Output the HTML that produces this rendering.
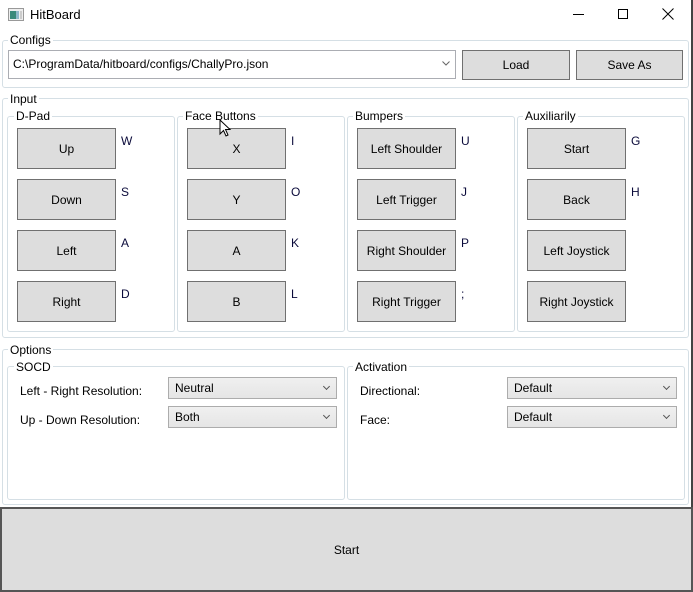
<!DOCTYPE html><html><head><style>
*{box-sizing:border-box}
body{margin:0;width:693px;height:592px;background:#fff;font-family:"Liberation Sans",sans-serif;font-size:12px;color:#000;position:relative;overflow:hidden}
.a{position:absolute}
.g{position:absolute;border:1px solid #d5dfe5;border-radius:3px}
.gl{position:absolute;background:#fff;padding:0 2px;line-height:14px}
.b{position:absolute;background:#dddddd;border:1px solid #707070;display:flex;align-items:center;justify-content:center}
.k{position:absolute;color:#0a0a3a}
.c{position:absolute;border:1px solid #acacac;background:linear-gradient(#f0f0f0,#e5e5e5);padding-left:6px;line-height:21px}
.c:after{content:"";position:absolute;right:7px;top:6px;width:4px;height:4px;border-right:1px solid #555;border-bottom:1px solid #555;transform:rotate(45deg)}
</style></head><body>
<div class="a" style="left:691px;top:0;width:2px;height:592px;background:#444"></div>
<svg class="a" style="left:8px;top:8px" width="16" height="13"><rect x="0.5" y="0.5" width="15" height="12" fill="#eee" stroke="#999"/><rect x="2" y="3" width="6" height="8" fill="#3a8a7a"/><rect x="8" y="3" width="3" height="8" fill="#8fb8c8"/><rect x="12" y="3" width="2" height="8" fill="#ccc"/></svg>
<div class="a" style="left:30px;top:7px;font-size:13px">HitBoard</div>
<div class="a" style="left:573px;top:14px;width:11px;height:1px;background:#000"></div>
<div class="a" style="left:618px;top:9px;width:10px;height:10px;border:1px solid #000"></div>
<svg class="a" style="left:662px;top:8px" width="12" height="12"><path d="M0.5 0.5L11.5 11.5M11.5 0.5L0.5 11.5" stroke="#000"/></svg>

<div class="g" style="left:2px;top:40px;width:687px;height:48px"></div><div class="gl" style="left:8px;top:33px">Configs</div>
<div class="a" style="left:8px;top:50px;width:448px;height:29px;border:1px solid #abadb3;background:#fff;padding:6px 0 0 4px">C:\ProgramData/hitboard/configs/ChallyPro.json</div>
<svg class="a" style="left:442px;top:61px" width="8" height="5"><path d="M0.5 0.5L4 4L7.5 0.5" stroke="#666" fill="none"/></svg>
<div class="b" style="left:462px;top:50px;width:108px;height:30px">Load</div>
<div class="b" style="left:576px;top:50px;width:107px;height:30px">Save As</div>

<div class="g" style="left:2px;top:98px;width:687px;height:240px"></div><div class="gl" style="left:8px;top:92px">Input</div>
<div class="g" style="left:7px;top:116px;width:168px;height:216px"></div><div class="gl" style="left:14px;top:109px">D-Pad</div>
<div class="g" style="left:177px;top:116px;width:168px;height:216px"></div><div class="gl" style="left:183px;top:109px">Face Buttons</div>
<div class="g" style="left:347px;top:116px;width:168px;height:216px"></div><div class="gl" style="left:353px;top:109px">Bumpers</div>
<div class="g" style="left:517px;top:116px;width:168px;height:216px"></div><div class="gl" style="left:523px;top:109px">Auxiliarily</div>

<div class="b" style="left:17px;top:128px;width:99px;height:41px">Up</div><div class="k" style="left:121px;top:134px">W</div>
<div class="b" style="left:17px;top:179px;width:99px;height:41px">Down</div><div class="k" style="left:121px;top:185px">S</div>
<div class="b" style="left:17px;top:230px;width:99px;height:41px">Left</div><div class="k" style="left:121px;top:236px">A</div>
<div class="b" style="left:17px;top:281px;width:99px;height:41px">Right</div><div class="k" style="left:121px;top:287px">D</div>

<div class="b" style="left:187px;top:128px;width:99px;height:41px">X</div><div class="k" style="left:291px;top:134px">I</div>
<div class="b" style="left:187px;top:179px;width:99px;height:41px">Y</div><div class="k" style="left:291px;top:185px">O</div>
<div class="b" style="left:187px;top:230px;width:99px;height:41px">A</div><div class="k" style="left:291px;top:236px">K</div>
<div class="b" style="left:187px;top:281px;width:99px;height:41px">B</div><div class="k" style="left:291px;top:287px">L</div>

<div class="b" style="left:357px;top:128px;width:99px;height:41px">Left Shoulder</div><div class="k" style="left:461px;top:134px">U</div>
<div class="b" style="left:357px;top:179px;width:99px;height:41px">Left Trigger</div><div class="k" style="left:461px;top:185px">J</div>
<div class="b" style="left:357px;top:230px;width:99px;height:41px">Right Shoulder</div><div class="k" style="left:461px;top:236px">P</div>
<div class="b" style="left:357px;top:281px;width:99px;height:41px">Right Trigger</div><div class="k" style="left:461px;top:287px">;</div>

<div class="b" style="left:527px;top:128px;width:99px;height:41px">Start</div><div class="k" style="left:631px;top:134px">G</div>
<div class="b" style="left:527px;top:179px;width:99px;height:41px">Back</div><div class="k" style="left:631px;top:185px">H</div>
<div class="b" style="left:527px;top:230px;width:99px;height:41px">Left Joystick</div>
<div class="b" style="left:527px;top:281px;width:99px;height:41px">Right Joystick</div>

<svg class="a" style="left:219px;top:119px" width="13" height="19"><path d="M1 1L1 15L4.5 11.5L7 17L9 16L6.5 10.5L11 10.5Z" fill="#fff" stroke="#000"/></svg>

<div class="g" style="left:2px;top:349px;width:687px;height:156px"></div><div class="gl" style="left:8px;top:343px">Options</div>
<div class="g" style="left:7px;top:366px;width:338px;height:134px"></div><div class="gl" style="left:14px;top:360px">SOCD</div>
<div class="g" style="left:347px;top:366px;width:338px;height:134px"></div><div class="gl" style="left:353px;top:360px">Activation</div>
<div class="a" style="left:20px;top:384px">Left - Right Resolution:</div>
<div class="a" style="left:20px;top:413px">Up - Down Resolution:</div>
<div class="c" style="left:168px;top:377px;width:169px;height:22px">Neutral</div>
<div class="c" style="left:168px;top:406px;width:169px;height:22px">Both</div>
<div class="a" style="left:360px;top:384px">Directional:</div>
<div class="a" style="left:360px;top:413px">Face:</div>
<div class="c" style="left:507px;top:377px;width:170px;height:22px">Default</div>
<div class="c" style="left:507px;top:406px;width:170px;height:22px">Default</div>

<div class="b" style="left:0;top:507px;width:693px;height:85px;border:2px solid #555">Start</div>
</body></html>
